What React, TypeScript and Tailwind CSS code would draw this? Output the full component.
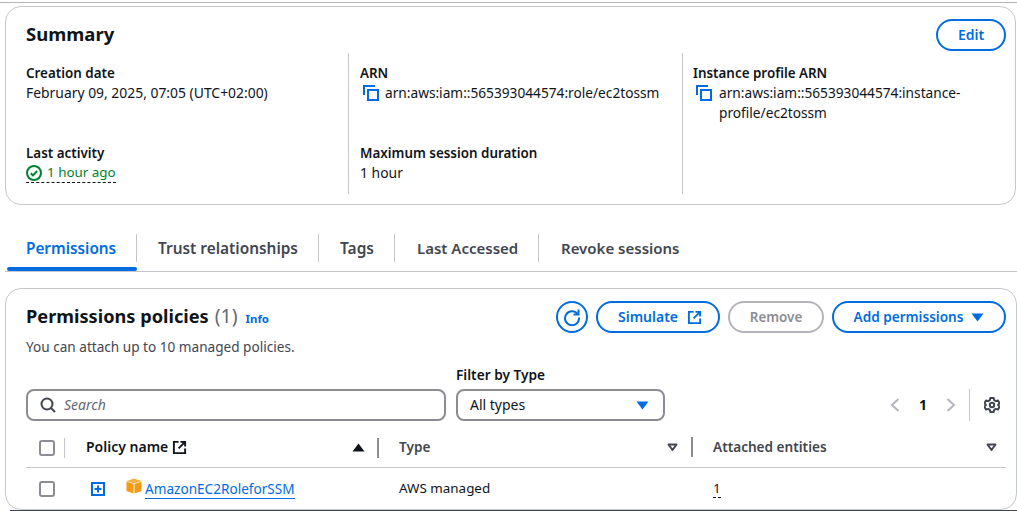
import { ReactNode } from 'react';

const FONT = "font-['Noto_Sans',sans-serif]";

function CopyIcon() {
  return (
    <svg width="16" height="16" viewBox="0 0 16 16" fill="none" stroke="#006ce0" strokeWidth="2" className="shrink-0">
      <path d="M1 10V1h11" />
      <rect x="5" y="5" width="10" height="10" />
    </svg>
  );
}

function ExternalIcon({ color = '#006ce0' }: { color?: string }) {
  return (
    <svg width="15" height="15" viewBox="0 0 16 16" fill="none" stroke={color} strokeWidth="2" className="shrink-0">
      <path d="M7 2H2v12h12V9" />
      <path d="M9 2h5v5M14 2 7 9" />
    </svg>
  );
}

function Caret({ color = '#006ce0', up }: { color?: string; up?: boolean }) {
  return (
    <svg width="13" height="9" viewBox="0 0 13 9" className="shrink-0">
      <path d={up ? 'M0.5 8.5h12L6.5 0.5z' : 'M0.5 0.5h12L6.5 8.5z'} fill={color} />
    </svg>
  );
}

function FilterCaret() {
  return (
    <svg width="11" height="9" viewBox="0 0 11 9" fill="none" stroke="#424650" strokeWidth="2" className="shrink-0">
      <path d="M1.5 1.5h8L5.5 7z" strokeLinejoin="round" />
    </svg>
  );
}

function Checkbox() {
  return <div className="h-4 w-4 shrink-0 rounded-[3px] border-2 border-[#8c8c94] bg-white" />;
}

function Item({ label, children, className = '' }: { label: string; children: ReactNode; className?: string }) {
  return (
    <div className={className}>
      <div className="text-[13.4px] leading-5 font-semibold text-[#0f141a]">{label}</div>
      <div className="text-[13.9px] leading-5 text-[#0f141a]">{children}</div>
    </div>
  );
}

function Tab({ label, active, width, className }: { label: string; active?: boolean; width: string; className: string }) {
  return (
    <div className={`relative flex h-[37px] items-center pb-[9px] ${width}`}>
      <div className={`flex h-7 w-full items-center font-semibold ${className} ${active ? 'text-[#006ce0]' : 'text-[#424650]'}`}>
        {label}
      </div>
      {active && <div className="absolute bottom-0 left-0 h-1 w-full rounded-sm bg-[#006ce0]" />}
    </div>
  );
}

function Button({ children, className = '' }: { children: ReactNode; className?: string }) {
  return (
    <div
      className={`flex h-8 items-center justify-center rounded-full border-2 border-[#006ce0] font-semibold text-[#006ce0] ${className}`}
    >
      {children}
    </div>
  );
}

export default function App() {
  return (
    <div className={`flex h-[511px] w-[1017px] flex-col overflow-hidden bg-white pt-[2px] ${FONT}`}>
      <div className="h-px shrink-0 bg-[#b4b4bb]" />

      {/* Summary */}
      <div className="mt-[3px] ml-[5px] h-[199px] w-[1011px] shrink-0 rounded-2xl border border-[#c6c6cd] pt-3 pr-[9px] pl-5">
        <div className="flex h-8 items-center justify-between">
          <h2 className="pb-[2px] text-[18.5px] leading-6 font-bold text-[#0f141a]">Summary</h2>
          <Button className="w-[70px] text-sm">Edit</Button>
        </div>
        <div className="mt-[2px] grid h-[141px] grid-cols-[322px_334px_1fr]">
          <div className="flex flex-col gap-10 pt-[10px]">
            <Item label="Creation date">February 09, 2025, 07:05 (UTC+02:00)</Item>
            <Item label="Last activity">
              <span className="inline-flex items-center gap-[5px] border-b border-dashed border-[#0f141a] text-[13.4px] leading-[19px] text-[#00802f]">
                <svg width="16" height="16" viewBox="0 0 16 16" fill="none" stroke="#00802f" strokeWidth="2">
                  <circle cx="8" cy="8" r="7" />
                  <path d="m4.8 8.2 2.2 2.2 4.2-4.4" />
                </svg>
                1 hour ago
              </span>
            </Item>
          </div>
          <div className="flex flex-col gap-10 border-l border-[#c6c6cd] pt-[10px] pl-[11px]">
            <Item label="ARN">
              <span className="flex gap-[6px] pl-[3px] text-[13.7px]">
                <span className="pt-[2px]">
                  <CopyIcon />
                </span>
                arn:aws:iam::565393044574:role/ec2tossm
              </span>
            </Item>
            <Item label="Maximum session duration">1 hour</Item>
          </div>
          <div className="border-l border-[#c6c6cd] pt-[10px] pl-[10px]">
            <Item label="Instance profile ARN">
              <span className="flex gap-[7px] pl-[3px] text-[13.7px]">
                <span className="pt-[2px]">
                  <CopyIcon />
                </span>
                <span className="w-[260px]">arn:aws:iam::565393044574:instance-profile/ec2tossm</span>
              </span>
            </Item>
          </div>
        </div>
      </div>

      {/* Tabs */}
      <div className="mt-[24px] ml-[5px] flex h-[43px] shrink-0 items-end border-b border-[#c6c6cd] pl-[2px]">
        <Tab label="Permissions" active width="w-[130px]" className="border-r border-[#c6c6cd] pl-[19px] text-[15.3px]" />
        <Tab label="Trust relationships" width="w-[182px]" className="border-r border-[#c6c6cd] pt-[2px] pl-[21px] text-[15.4px]" />
        <Tab label="Tags" width="w-[76px]" className="border-r border-[#c6c6cd] pt-[2px] pl-[21px] text-[15.5px]" />
        <Tab label="Last Accessed" width="w-[144px]" className="border-r border-[#c6c6cd] pl-[22px] text-[15px]" />
        <Tab label="Revoke sessions" width="w-[180px]" className="pl-[22px] text-[15px]" />
      </div>

      {/* Permissions policies */}
      <div className="mt-[16px] ml-[5px] h-[222px] w-[1012px] shrink-0 rounded-2xl border border-[#c6c6cd] pt-3 pr-[10px] pl-5">
        <div className="flex items-start justify-between">
          <div>
            <div className="flex h-8 items-center">
              <h2 className="pb-[2px] text-[18.2px] leading-6 font-bold text-[#0f141a]">Permissions policies</h2>
              <span className="ml-[6px] pb-[2px] text-[19.5px] leading-6 font-normal text-[#656871]">(1)</span>
              <span className="ml-2 pt-[3px] text-[11.4px] font-bold text-[#006ce0]">Info</span>
            </div>
            <div className="mt-[5px] text-[13.6px] leading-[18px] text-[#424650]">
              You can attach up to 10 managed policies.
            </div>
          </div>
          <div className="flex items-center gap-2">
            <div className="flex h-8 w-8 items-center justify-center rounded-full border-2 border-[#006ce0]">
              <svg width="18" height="18" viewBox="0 0 18 18" fill="none" stroke="#006ce0" strokeWidth="2">
                <path d="M14.6 6A7 7 0 1 0 16 9.5" />
                <path d="M15.5 1.5V6.5H10.5" />
              </svg>
            </div>
            <Button className="w-[124px] gap-[9px] pl-1 text-sm">
              Simulate
              <ExternalIcon />
            </Button>
            <div className="flex h-8 w-[96px] items-center justify-center rounded-full border-2 border-[#b4b4bb] text-[13.4px] font-semibold text-[#8c8c94]">
              Remove
            </div>
            <Button className="w-[174px] gap-2 text-[13.6px]">
              Add permissions
              <Caret />
            </Button>
          </div>
        </div>

        <div className="mt-[10px] flex items-end">
          <div className="flex h-8 w-[420px] items-center rounded-lg border-2 border-[#8c8c94] pl-3">
            <svg width="16" height="16" viewBox="0 0 16 16" fill="none" stroke="#424650" strokeWidth="2">
              <circle cx="7" cy="7" r="5.5" />
              <path d="m11 11 4 4" />
            </svg>
            <span className="ml-2 text-sm text-[#656871] italic">Search</span>
          </div>
          <div className="ml-[10px]">
            <div className="mb-[5px] text-[13.7px] leading-[18px] font-semibold text-[#0f141a]">Filter by Type</div>
            <div className="flex h-8 w-[209px] items-center justify-between rounded-lg border-2 border-[#8c8c94] pr-[14px] pl-3 text-sm text-[#0f141a]">
              All types
              <Caret />
            </div>
          </div>
          <div className="ml-auto flex h-8 items-center pr-[6px]">
            <svg width="12" height="16" viewBox="0 0 12 16" fill="none" stroke="#b4b4bb" strokeWidth="2">
              <path d="M9.5 2 3 8l6.5 6" />
            </svg>
            <span className="mx-[18px] text-sm font-bold text-[#0f141a]">1</span>
            <svg width="12" height="16" viewBox="0 0 12 16" fill="none" stroke="#b4b4bb" strokeWidth="2">
              <path d="M2.5 2 9 8l-6.5 6" />
            </svg>
            <div className="mr-[14px] ml-3 h-8 w-px bg-[#c6c6cd]" />
            <svg width="16" height="16" viewBox="0 0 16 16" fill="none" stroke="#424650" strokeWidth="2" strokeLinejoin="round">
              <path d="M6.3 1h3.4l.5 2.2 1.6.9 2.2-.7 1.6 2.9L14.1 8l1.5 1.7-1.6 2.9-2.2-.7-1.6.9L9.7 15H6.3l-.5-2.2-1.6-.9-2.2.7L.4 9.7 1.9 8 .4 6.3 2 3.4l2.2.7 1.6-.9z" />
              <circle cx="8" cy="8" r="2.2" />
            </svg>
          </div>
        </div>

        {/* Table header */}
        <div className="mt-2 grid h-[39px] grid-cols-[353px_314px_1fr] items-center border-b border-[#c6c6cd] pb-px text-[13.6px] font-semibold">
          <div className="flex items-center pl-[13px]">
            <Checkbox />
            <div className="mr-[21px] ml-[9px] h-5 w-px bg-[#c6c6cd]" />
            <span className="pb-[2px] text-sm text-[#0f141a]">Policy name</span>
            <span className="ml-1">
              <ExternalIcon color="#0f141a" />
            </span>
            <span className="ml-auto flex items-center">
              <Caret color="#0f141a" up />
              <span className="ml-3 h-5 w-0.5 bg-[#8c8c94]" />
            </span>
          </div>
          <div className="flex items-center pl-5 text-[#424650]">
            Type
            <span className="ml-auto flex items-center gap-[13px]">
              <FilterCaret />
              <span className="h-5 w-0.5 bg-[#8c8c94]" />
            </span>
          </div>
          <div className="flex items-center pr-[9px] pl-5 text-[#424650]">
            Attached entities
            <span className="ml-auto">
              <FilterCaret />
            </span>
          </div>
        </div>

        {/* Table row */}
        <div className="grid h-[41px] grid-cols-[353px_314px_1fr] items-center text-[13.4px] text-[#0f141a]">
          <div className="flex items-center pl-[13px]">
            <Checkbox />
            <svg width="14" height="14" viewBox="0 0 14 14" fill="none" stroke="#006ce0" strokeWidth="2" className="ml-[36px]">
              <rect x="1" y="1" width="12" height="12" />
              <path d="M3.5 7h7M7 3.5v7" />
            </svg>
            <svg width="16" height="16" viewBox="0 0 16 16" className="mb-[5px] ml-[21px]">
              <path d="M8 0.5 15.5 3 8 5.5 0.5 3z" fill="#f5b041" />
              <path d="M0.5 3.6 7.5 6v9.5L0.5 13z" fill="#f39c12" />
              <path d="M15.5 3.6 8.5 6v9.5l7-2.5z" fill="#f39c12" />
            </svg>
            <span className="ml-[3px] border-b border-[#006ce0] text-[13.6px] leading-[19px] text-[#006ce0]">AmazonEC2RoleforSSM</span>
          </div>
          <div className="pl-5">AWS managed</div>
          <div className="pl-5">
            <span className="border-b border-dashed border-[#0f141a] leading-[18px]">1</span>
          </div>
        </div>
      </div>

      <div className="ml-[10px] h-px shrink-0 bg-[#424650]" />
    </div>
  );
}
